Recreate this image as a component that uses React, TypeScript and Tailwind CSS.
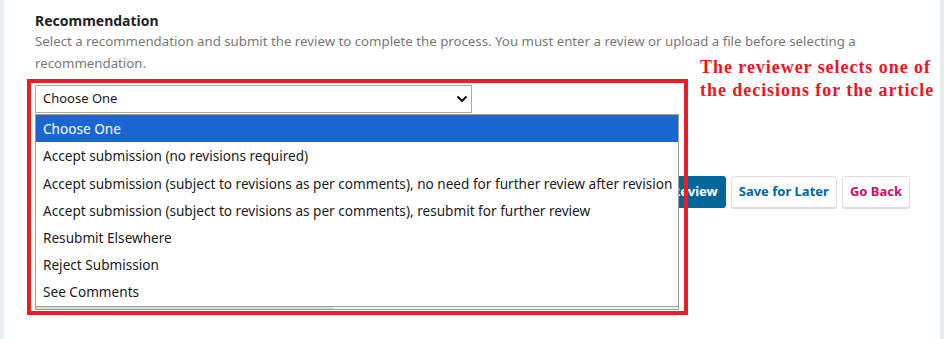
const options = [
  "Choose One",
  "Accept submission (no revisions required)",
  "Accept submission (subject to revisions as per comments), no need for further review after revision",
  "Accept submission (subject to revisions as per comments), resubmit for further review",
  "Resubmit Elsewhere",
  "Reject Submission",
  "See Comments",
];

export default function App() {
  return (
    <div className="flex h-[339px] bg-white font-['Noto_Sans',sans-serif] overflow-hidden">
      <div className="w-[4px] shrink-0 bg-[#eceff1]" />

      <div className="relative flex-1 pl-[31px] pt-[11px]">
        <h3 className="text-[14px] leading-[20px] font-bold text-[#222]">Recommendation</h3>
        <p className="max-w-[870px] text-[13.25px] leading-[21.6px] text-[#777]">
          Select a recommendation and submit the review to complete the process. You must enter a review or upload a
          file before selecting a recommendation.
        </p>

        <div className="relative mt-[11px] w-[437px]">
          <div className="flex h-[28px] items-center justify-between border border-[#a9a9a9] bg-white pl-[7px] pr-[3px]">
            <span className="text-[13px] text-[#1a1a1a]">Choose One</span>
            <svg width="12" height="8" viewBox="0 0 12 8">
              <path d="M1.5 1.5 L6 6 L10.5 1.5" fill="none" stroke="#111" strokeWidth="2.2" />
            </svg>
          </div>

          {/* open option list */}
          <div className="absolute left-0 top-[29px] z-10 flex h-[196px] w-[644px] flex-col overflow-hidden border border-[#9a9a9a] bg-white">
            {options.map((opt, i) => (
              <div
                key={opt}
                className={
                  i === 0
                    ? "h-[27.2px] shrink-0 whitespace-nowrap bg-[#1a67d2] pl-[7px] text-[13.6px] leading-[27.2px] text-white"
                    : "h-[27.2px] shrink-0 whitespace-nowrap pl-[7px] text-[13.6px] leading-[27.2px] text-[#1a1a1a]"
                }
              >
                {opt}
              </div>
            ))}
            <div className="mt-auto h-[4px] border-t border-[#a0a0a0] bg-[#f1f1f1]">
              <div className="h-full w-[297px] bg-[#dcdcdc]" />
            </div>
          </div>

          {/* annotation frame */}
          <div className="pointer-events-none absolute -left-[8px] -top-[6px] z-20 h-[236px] w-[661px] border-[4px] border-[#ee1c25]" />
        </div>

        <div className="mt-[63px] flex justify-end gap-[5px] pr-[30px]">
          <button className="h-[32px] rounded-[3px] bg-[#006798] px-[8px] text-[13px] font-bold text-white">
            Submit Review
          </button>
          <button className="h-[32px] rounded-[3px] border border-[#ddd] bg-white px-[7px] text-[13px] font-bold text-[#006798] shadow-[0_1px_0_#ddd]">
            Save for Later
          </button>
          <button className="h-[32px] rounded-[3px] border border-[#ddd] bg-white px-[7px] text-[13px] font-bold text-[#d00a6c] shadow-[0_1px_0_#ddd]">
            Go Back
          </button>
        </div>

        <div className="absolute left-[696px] top-[56px] font-['Liberation_Serif',serif] text-[18px] leading-[23px] font-bold tracking-[0.95px] text-[#f0141e]">
          <p>The reviewer selects one of</p>
          <p>the decisions for the article</p>
        </div>
      </div>

      <div className="w-[4px] shrink-0 bg-[#e8ebec]" />
    </div>
  );
}
